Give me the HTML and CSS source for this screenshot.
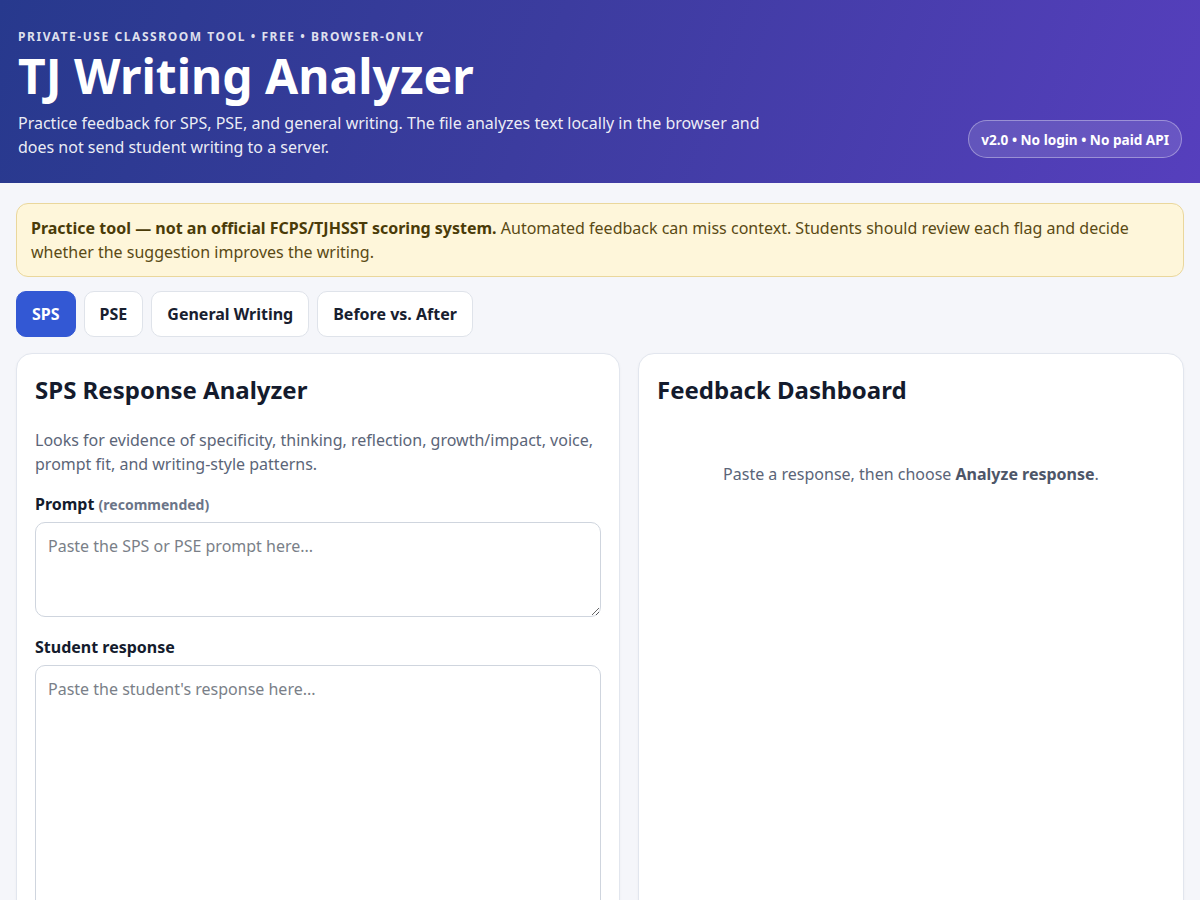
FILE: index.html
```html
<!DOCTYPE html>
<html lang="en">
<head>
<meta charset="utf-8">
<title>TJ Writing Analyzer</title>
<link rel="stylesheet" href="styles.css">
</head>
<body>
<header class="hero">
  <div class="hero-text">
    <div class="eyebrow">Private-use classroom tool • Free • Browser-only</div>
    <h1 class="title">TJ Writing Analyzer</h1>
    <p class="lede">Practice feedback for SPS, PSE, and general writing. The file analyzes text locally in the browser and does not send student writing to a server.</p>
  </div>
  <div class="badge">v2.0 • No login • No paid API</div>
</header>
<main class="main">
  <div class="notice"><strong>Practice tool — not an official FCPS/TJHSST scoring system.</strong> Automated feedback can miss context. Students should review each flag and decide whether the suggestion improves the writing.</div>
  <nav class="tabs">
    <button class="tab active">SPS</button>
    <button class="tab">PSE</button>
    <button class="tab">General Writing</button>
    <button class="tab">Before vs. After</button>
  </nav>
  <div class="grid">
    <section class="panel">
      <h2 class="panel-title">SPS Response Analyzer</h2>
      <p class="panel-desc">Looks for evidence of specificity, thinking, reflection, growth/impact, voice, prompt fit, and writing-style patterns.</p>
      <label class="field-label">Prompt <span class="hint">(recommended)</span></label>
      <textarea class="input prompt" placeholder="Paste the SPS or PSE prompt here..."></textarea>
      <label class="field-label second">Student response</label>
      <textarea class="input response" placeholder="Paste the student's response here..."></textarea>
    </section>
    <section class="panel">
      <h2 class="panel-title">Feedback Dashboard</h2>
      <p class="empty">Paste a response, then choose <strong>Analyze response</strong>.</p>
    </section>
  </div>
</main>
</body>
</html>
```
FILE: styles.css
```css
* { box-sizing: border-box; }
html, body { margin: 0; padding: 0; }
body {
  font-family: "Noto Sans", "Open Sans", sans-serif;
  background: #f5f6fa;
  color: #141b2d;
}
.hero {
  background: linear-gradient(110deg, #27398d 0%, #3c3c9f 45%, #563fbd 100%);
  color: #fff;
  padding: 29px 18px 24px;
  display: flex;
  justify-content: space-between;
  align-items: flex-end;
}
.eyebrow {
  font-size: 12px;
  font-weight: 700;
  text-transform: uppercase;
  letter-spacing: 0.13em;
  line-height: 16px;
  color: rgba(255,255,255,0.85);
}
.title {
  margin: 5px 0 9px;
  font-size: 48px;
  line-height: 52px;
  font-weight: 700;
}
.lede {
  margin: 0;
  font-size: 16px;
  line-height: 24px;
  max-width: 760px;
  color: rgba(255,255,255,0.92);
}
.badge {
  height: 38px;
  padding: 0 12px;
  border-radius: 19px;
  background: rgba(255,255,255,0.12);
  border: 1px solid rgba(255,255,255,0.35);
  font-size: 13.6px;
  font-weight: 700;
  display: flex;
  align-items: center;
  white-space: nowrap;
  margin-bottom: 1px;
}
.main {
  padding: 20px 16px 0;
}
.notice {
  background: #fef6da;
  border: 1px solid #ead79c;
  border-radius: 12px;
  padding: 12px 14px;
  font-size: 16px;
  line-height: 24px;
  color: #5a4a14;
}
.notice strong { color: #4a3b08; }
.tabs {
  display: flex;
  gap: 8px;
  margin-top: 14px;
}
.tab {
  font-family: inherit;
  font-size: 16px;
  font-weight: 700;
  height: 46px;
  padding: 0 15px;
  border-radius: 10px;
  border: 1px solid #dfe3ea;
  background: #fff;
  color: #18202f;
}
.tab.active {
  background: #3358d4;
  border-color: #3358d4;
  color: #fff;
}
.grid {
  display: grid;
  grid-template-columns: 604fr 546fr;
  gap: 18px;
  margin-top: 16px;
}
.panel {
  background: #fff;
  border: 1px solid #e2e6ee;
  border-radius: 16px;
  padding: 20px 18px 18px;
  box-shadow: 0 1px 3px rgba(20,30,60,0.04);
  min-height: 700px;
}
.panel-title {
  margin: 0;
  font-size: 24px;
  line-height: 32px;
  font-weight: 700;
  color: #141b2d;
}
.panel-desc {
  margin: 22px 0 0;
  font-size: 16px;
  line-height: 24px;
  color: #5b6578;
}
.field-label {
  display: block;
  margin-top: 16px;
  font-size: 16px;
  line-height: 24px;
  font-weight: 700;
  color: #141b2d;
}
.field-label.second { margin-top: 18px; }
.hint {
  font-size: 14px;
  color: #6b7588;
}
.input {
  display: block;
  width: 100%;
  margin-top: 5px;
  border: 1px solid #cfd5de;
  border-radius: 10px;
  padding: 11px 12px;
  font-family: inherit;
  font-size: 16px;
  line-height: 24px;
  color: #141b2d;
  background: #fff;
}
.input::placeholder { color: #7a7f88; }
.prompt { height: 95px; }
.response { height: 320px; margin-top: 6px; }
.empty {
  margin: 56px 0 0;
  text-align: center;
  font-size: 16px;
  line-height: 24px;
  color: #5b6578;
}
.empty strong { color: #4d5668; }
```
